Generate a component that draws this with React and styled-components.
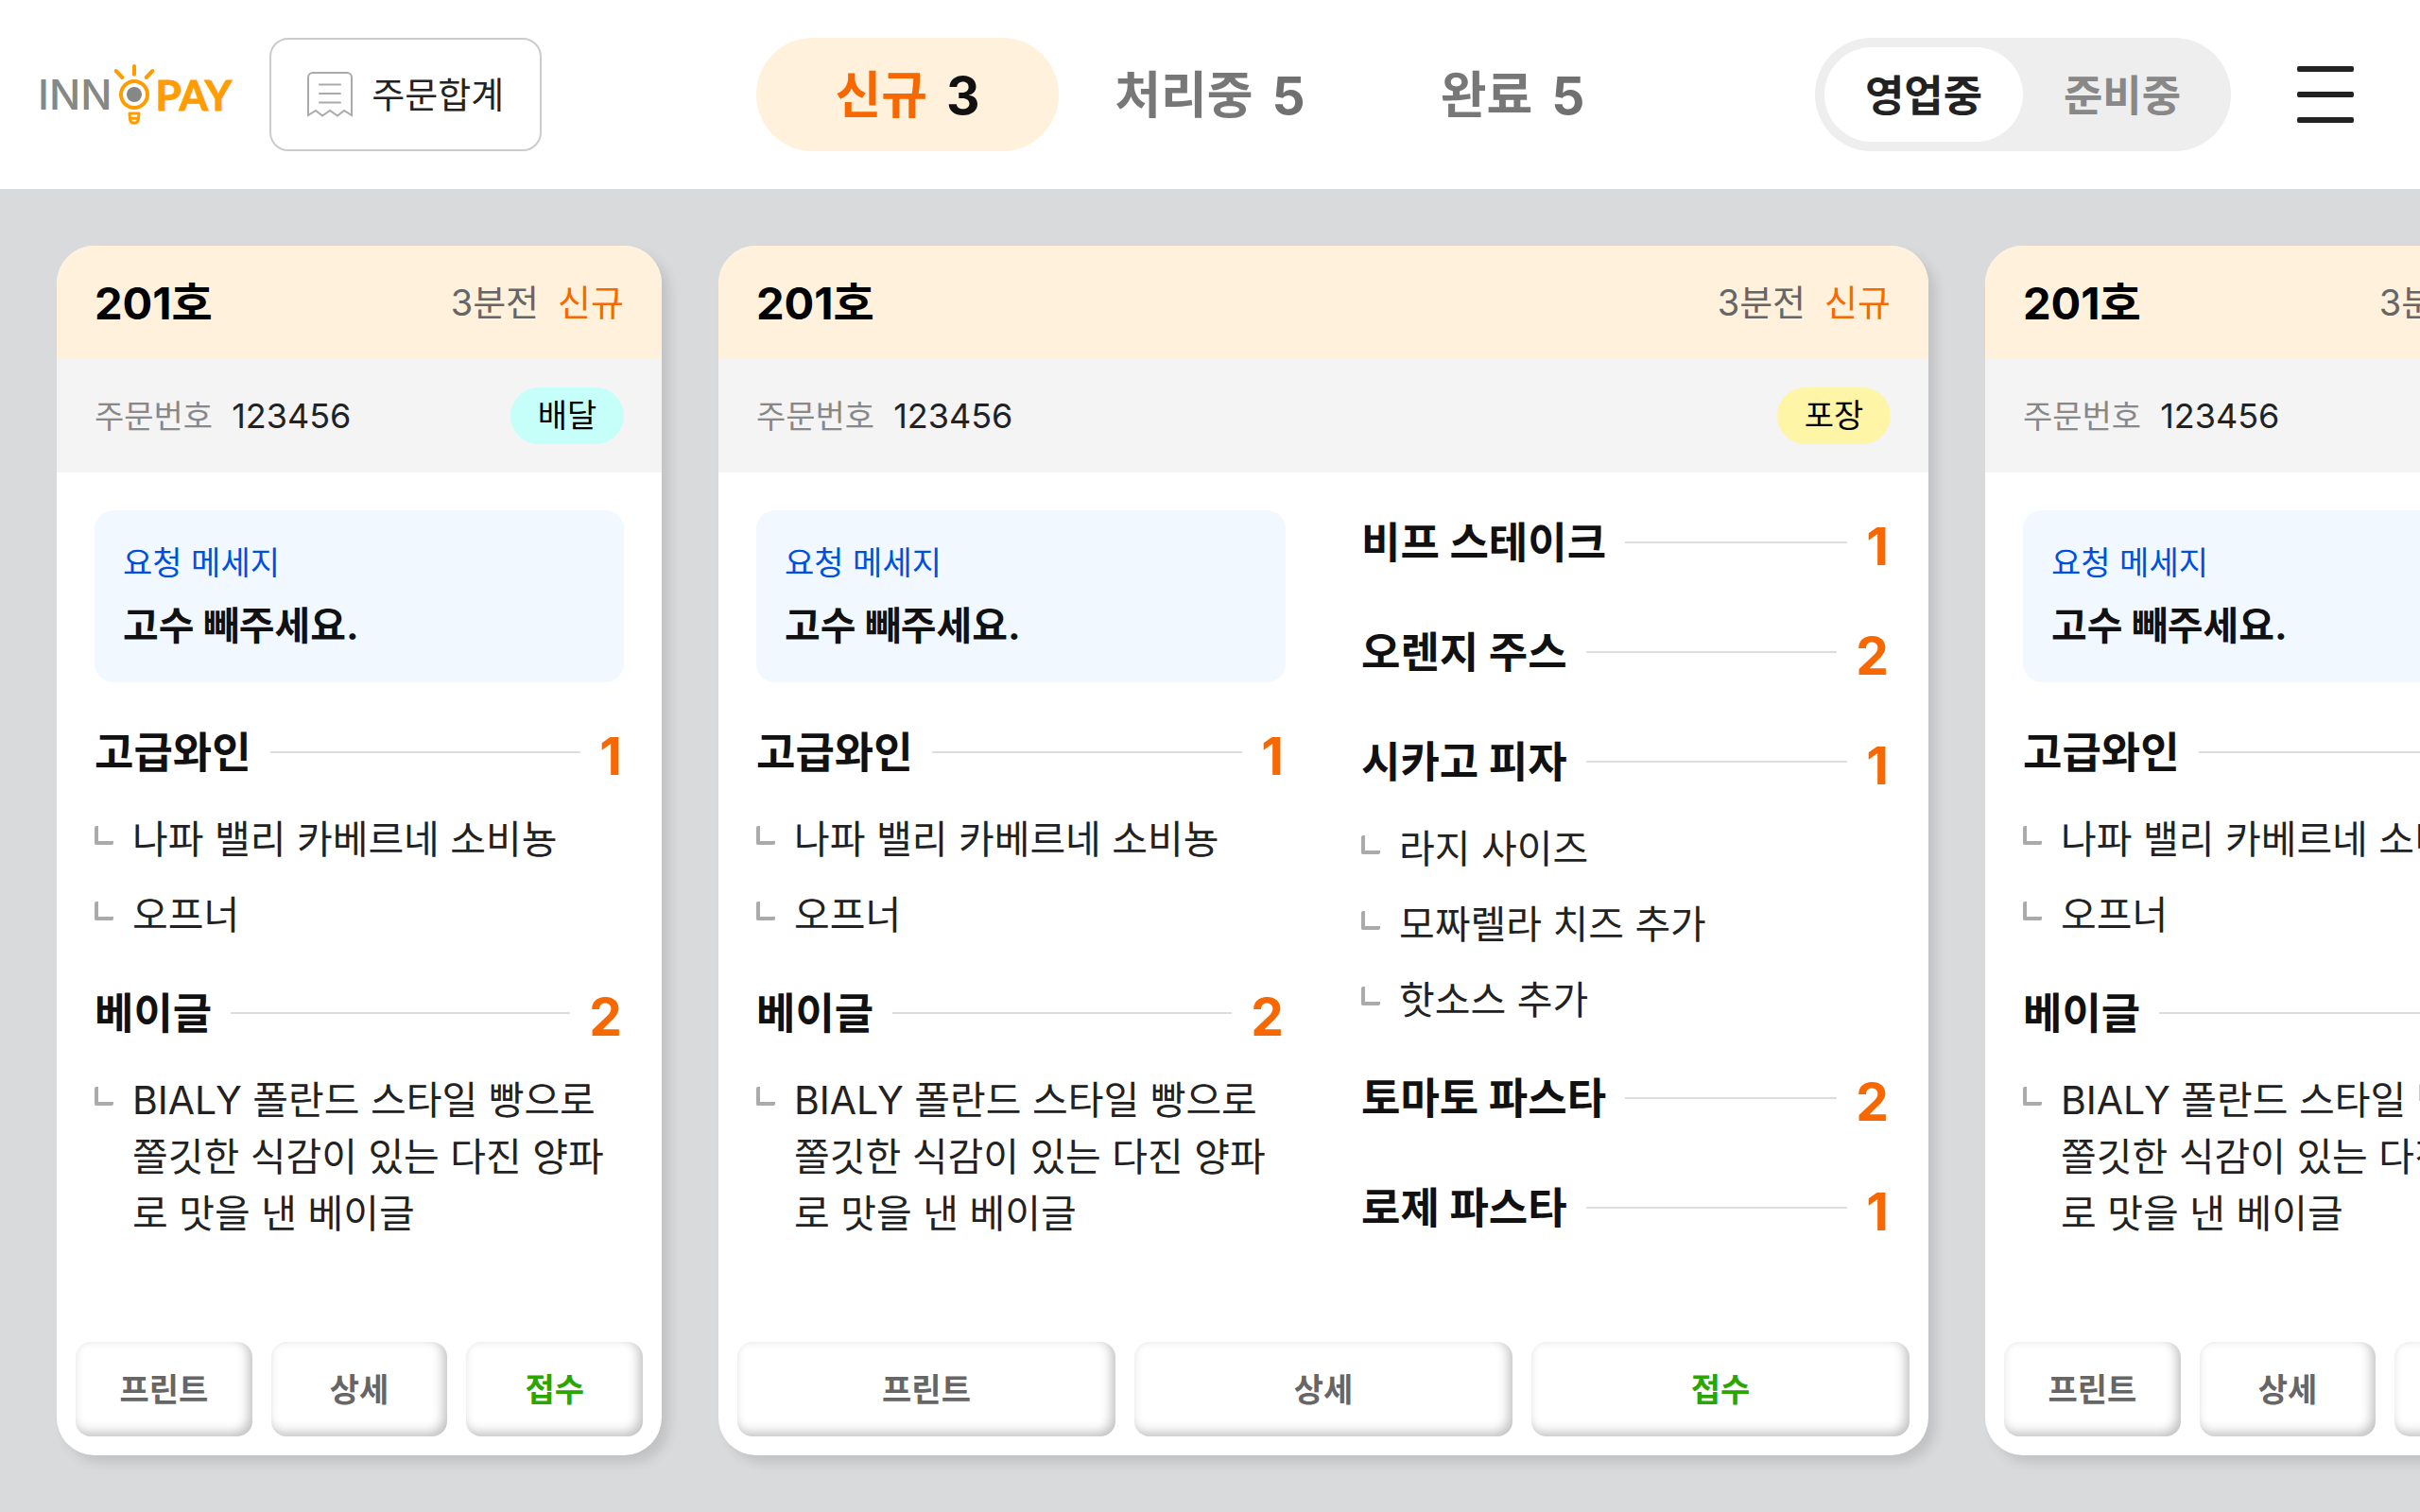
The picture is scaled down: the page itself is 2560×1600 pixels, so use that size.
import React, { useState } from "react";
import styled, { createGlobalStyle, css } from "styled-components";

const color = {
  page: "#d9dadc",
  orange: "#f86800",
  cream: "#fff1db",
  ink: "#111",
  text: "#222",
  muted: "#666",
  faint: "#888",
  line: "#ddd",
};

const GlobalStyle = createGlobalStyle`
  *, *::before, *::after { box-sizing: border-box; }
  body {
    margin: 0;
    background: ${color.page};
    color: ${color.text};
    font-family: Inter, "Noto Sans CJK KR", sans-serif;
    line-height: 1.5;
  }
  h2, h3, p, ul { margin: 0; padding: 0; }
  ul { list-style: none; }
  button {
    border: 0;
    padding: 0;
    background: none;
    color: inherit;
    font: inherit;
    cursor: pointer;
  }
`;

const Page = styled.div`
  display: flex;
  flex-direction: column;
  min-height: 100vh;
`;

const Header = styled.header`
  display: grid;
  grid-template-columns: 1fr auto 1fr;
  align-items: center;
  height: 200px;
  padding: 0 40px;
  background: #fff;
`;

const HeaderStart = styled.div`
  display: flex;
  align-items: center;
  gap: 40px;
`;

const HeaderEnd = styled.div`
  display: flex;
  align-items: center;
  justify-content: flex-end;
  gap: 40px;
`;

const LogoLink = styled.a`
  display: flex;
  align-items: center;
  line-height: 64px;
  text-decoration: none;
`;

const LogoInno = styled.span`
  color: #868886;
  font-size: 44px;
  font-weight: 500;
`;

const LogoPay = styled.span`
  color: #ff9d00;
  font-family: Lato, sans-serif;
  font-size: 44px;
  font-weight: 700;
  -webkit-text-stroke: 1px #ff9d00;
`;

const TotalButton = styled.button`
  display: flex;
  align-items: center;
  gap: 20px;
  height: 120px;
  padding: 0 38px;
  border: 2px solid #ccc;
  border-radius: 20px;
  font-size: 38px;
`;

const Tabs = styled.nav`
  display: flex;
`;

const Tab = styled.button`
  display: flex;
  align-items: center;
  justify-content: center;
  gap: 20px;
  width: 320px;
  height: 120px;
  padding-top: 3px;
  border-radius: 60px;
  background: ${(p) => (p.$active ? color.cream : "transparent")};
  color: ${(p) => (p.$active ? color.orange : "#777")};
  font-size: 53px;
  font-weight: 700;
`;

const TabCount = styled.span`
  color: ${(p) => (p.$active ? color.ink : "#707070")};
  font-size: 55px;
  font-weight: 700;
`;

const Segmented = styled.div`
  display: flex;
  height: 120px;
  padding: 10px;
  border-radius: 60px;
  background: #eee;
`;

const Segment = styled.button`
  width: 210px;
  padding-top: 3px;
  border-radius: 50px;
  background: ${(p) => (p.$active ? "#fff" : "transparent")};
  color: ${(p) => (p.$active ? color.text : color.faint)};
  font-size: 45px;
  font-weight: 700;
`;

const MenuButton = styled.button`
  display: flex;
  flex-direction: column;
  align-items: center;
  justify-content: center;
  gap: 21px;
  width: 120px;
  height: 120px;
`;

const MenuBar = styled.span`
  width: 60px;
  height: 6px;
  border-radius: 2px;
  background: ${color.text};
`;

const Board = styled.main`
  display: flex;
  flex: 1;
  gap: 60px;
  padding: 60px;
  overflow-x: auto;
  scrollbar-width: none;
`;

const Card = styled.article`
  display: flex;
  flex: 0 0 ${(p) => (p.$wide ? "1280px" : "640px")};
  flex-direction: column;
  border-radius: 40px;
  background: #fff;
  box-shadow: 8px 8px 12px rgba(0, 0, 0, 0.11);
`;

const bar = css`
  display: flex;
  align-items: center;
  justify-content: space-between;
  height: 120px;
  padding: 0 40px;
`;

const CardHead = styled.header`
  ${bar}
  border-radius: 40px 40px 0 0;
  background: ${color.cream};
`;

const Room = styled.h2`
  padding-top: 2px;
  color: #000;
  font-size: 47px;
  font-weight: 700;
`;

const Status = styled.p`
  display: flex;
  gap: 20px;
  color: ${color.muted};
  font-size: 38px;
`;

const StatusTag = styled.span`
  color: ${color.orange};
`;

const OrderBar = styled.div`
  ${bar}
  background: #f4f4f4;
`;

const OrderNumber = styled.p`
  display: flex;
  align-items: center;
  gap: 20px;
  color: ${color.text};
  font-size: 36px;
`;

const OrderLabel = styled.span`
  color: ${color.faint};
  font-size: 34px;
`;

const Badge = styled.span`
  width: 120px;
  border-radius: 30px;
  background: ${(p) => (p.$kind === "배달" ? "#c6fffa" : "#fff5a6")};
  color: #000;
  font-size: 34px;
  line-height: 60px;
  text-align: center;
`;

const CardBody = styled.div`
  display: flex;
  flex: 1;
  gap: 80px;
  padding: 40px;
`;

const Column = styled.div`
  display: flex;
  flex: 1;
  flex-direction: column;
  gap: 40px;
  min-width: 0;
`;

const Request = styled.section`
  display: flex;
  flex-direction: column;
  gap: 10px;
  padding: 30px;
  border-radius: 20px;
  background: #f1f8ff;
`;

const RequestLabel = styled.h3`
  color: #0050e0;
  font-size: 34px;
  font-weight: 400;
  line-height: 52px;
`;

const RequestText = styled.p`
  color: ${color.ink};
  font-size: 41px;
  font-weight: 700;
  line-height: 60px;
`;

const ItemRow = styled.div`
  display: flex;
  align-items: center;
  gap: 20px;
  height: 68px;
  margin-bottom: 8px;
`;

const ItemName = styled.h3`
  padding-top: 2px;
  color: ${color.ink};
  font-size: 45px;
  font-weight: 700;
  line-height: 68px;
`;

const Leader = styled.span`
  flex: 1;
  height: 2px;
  background: ${color.line};
`;

const Quantity = styled.span`
  padding: 8px 2px 0 0;
  color: ${color.orange};
  font-size: 55px;
  font-weight: 700;
  line-height: 60px;
`;

const Options = styled.ul`
  display: flex;
  flex-direction: column;
  gap: 20px;
  padding-top: 20px;
`;

const Option = styled.li`
  display: flex;
  gap: 20px;
  font-size: 41px;
  line-height: 60px;
`;

const Elbow = styled.span`
  flex: none;
  width: 20px;
  height: 20px;
  margin-top: 16px;
  border: solid #aaa;
  border-width: 0 0 4px 4px;
  border-radius: 2px;
`;

const Actions = styled.footer`
  display: grid;
  grid-template-columns: repeat(3, 1fr);
  gap: 20px;
  padding: 20px;
`;

const Action = styled.button`
  height: 100px;
  border-radius: 16px;
  background: #fff;
  box-shadow: inset -4px -4px 12px rgba(0, 0, 0, 0.25);
  color: ${(p) => (p.$primary ? "#2ba500" : color.muted)};
  font-size: 34px;
  font-weight: 700;
`;

function Bulb() {
  return (
    <svg width="46" height="66" viewBox="0 0 138 198" fill="none" strokeLinecap="round" aria-hidden="true">
      <g stroke="#ff9d00" strokeWidth="12">
        <path d="M69 9v26M11 24l20 21M127 24l-20 21" />
        <circle cx="69" cy="99" r="42" />
      </g>
      <circle cx="69" cy="99" r="24" fill="#868886" />
      <path
        d="M54 159h30l-2 20q-2 11-13 11t-13-11zM56 175h26"
        stroke="#ff9d00"
        strokeWidth="9"
        strokeLinejoin="round"
      />
    </svg>
  );
}

function ReceiptIcon() {
  return (
    <svg width="48" height="48" viewBox="0 0 48 48" fill="none" stroke="#aaa" strokeWidth="2" aria-hidden="true">
      <path d="M1 46V6a5 5 0 0 1 5-5h36a5 5 0 0 1 5 5v40l-8-5-7 5.500-8-5.500-8 5.500-7-5.500z" />
      <path d="M13 13.500h22M13 23h22M13 32.500h22" strokeLinecap="round" />
    </svg>
  );
}

const wine = { name: "고급와인", count: 1, options: ["나파 밸리 카베르네 소비뇽", "오프너"] };
const bagel = {
  name: "베이글",
  count: 2,
  options: ["BIALY 폴란드 스타일 빵으로 쫄깃한 식감이 있는 다진 양파로 맛을 낸 베이글"],
};

const orders = [
  { id: 1, kind: "배달", columns: [[wine, bagel]] },
  {
    id: 2,
    kind: "포장",
    columns: [
      [wine, bagel],
      [
        { name: "비프 스테이크", count: 1 },
        { name: "오렌지 주스", count: 2 },
        { name: "시카고 피자", count: 1, options: ["라지 사이즈", "모짜렐라 치즈 추가", "핫소스 추가"] },
        { name: "토마토 파스타", count: 2 },
        { name: "로제 파스타", count: 1 },
      ],
    ],
  },
  { id: 3, kind: "배달", columns: [[wine, bagel]] },
];

const tabs = [
  { label: "신규", count: 3 },
  { label: "처리중", count: 5 },
  { label: "완료", count: 5 },
];

function Item({ item }) {
  return (
    <section>
      <ItemRow>
        <ItemName>{item.name}</ItemName>
        <Leader />
        <Quantity>{item.count}</Quantity>
      </ItemRow>
      {item.options && (
        <Options>
          {item.options.map((option) => (
            <Option key={option}>
              <Elbow />
              <span>{option}</span>
            </Option>
          ))}
        </Options>
      )}
    </section>
  );
}

function OrderCard({ order }) {
  return (
    <Card $wide={order.columns.length > 1}>
      <CardHead>
        <Room>201호</Room>
        <Status>
          <span>3분전</span>
          <StatusTag>신규</StatusTag>
        </Status>
      </CardHead>
      <OrderBar>
        <OrderNumber>
          <OrderLabel>주문번호</OrderLabel>
          <span>123456</span>
        </OrderNumber>
        <Badge $kind={order.kind}>{order.kind}</Badge>
      </OrderBar>
      <CardBody>
        {order.columns.map((items, index) => (
          <Column key={index}>
            {index === 0 && (
              <Request>
                <RequestLabel>요청 메세지</RequestLabel>
                <RequestText>고수 빼주세요.</RequestText>
              </Request>
            )}
            {items.map((item) => (
              <Item key={item.name} item={item} />
            ))}
          </Column>
        ))}
      </CardBody>
      <Actions>
        <Action type="button">프린트</Action>
        <Action type="button">상세</Action>
        <Action type="button" $primary>접수</Action>
      </Actions>
    </Card>
  );
}

export default function App() {
  const [tab, setTab] = useState("신규");
  const [mode, setMode] = useState("영업중");

  return (
    <Page>
      <GlobalStyle />
      <Header>
        <HeaderStart>
          <LogoLink href="#">
            <LogoInno>INN</LogoInno>
            <Bulb />
            <LogoPay>PAY</LogoPay>
          </LogoLink>
          <TotalButton type="button">
            <ReceiptIcon />
            주문합계
          </TotalButton>
        </HeaderStart>
        <Tabs>
          {tabs.map(({ label, count }) => (
            <Tab key={label} type="button" $active={tab === label} onClick={() => setTab(label)}>
              {label}
              <TabCount $active={tab === label}>{count}</TabCount>
            </Tab>
          ))}
        </Tabs>
        <HeaderEnd>
          <Segmented>
            {["영업중", "준비중"].map((label) => (
              <Segment
                key={label}
                type="button"
                aria-pressed={mode === label}
                $active={mode === label}
                onClick={() => setMode(label)}
              >
                {label}
              </Segment>
            ))}
          </Segmented>
          <MenuButton type="button" aria-label="메뉴">
            <MenuBar />
            <MenuBar />
            <MenuBar />
          </MenuButton>
        </HeaderEnd>
      </Header>
      <Board>
        {orders.map((order) => (
          <OrderCard key={order.id} order={order} />
        ))}
      </Board>
    </Page>
  );
}
